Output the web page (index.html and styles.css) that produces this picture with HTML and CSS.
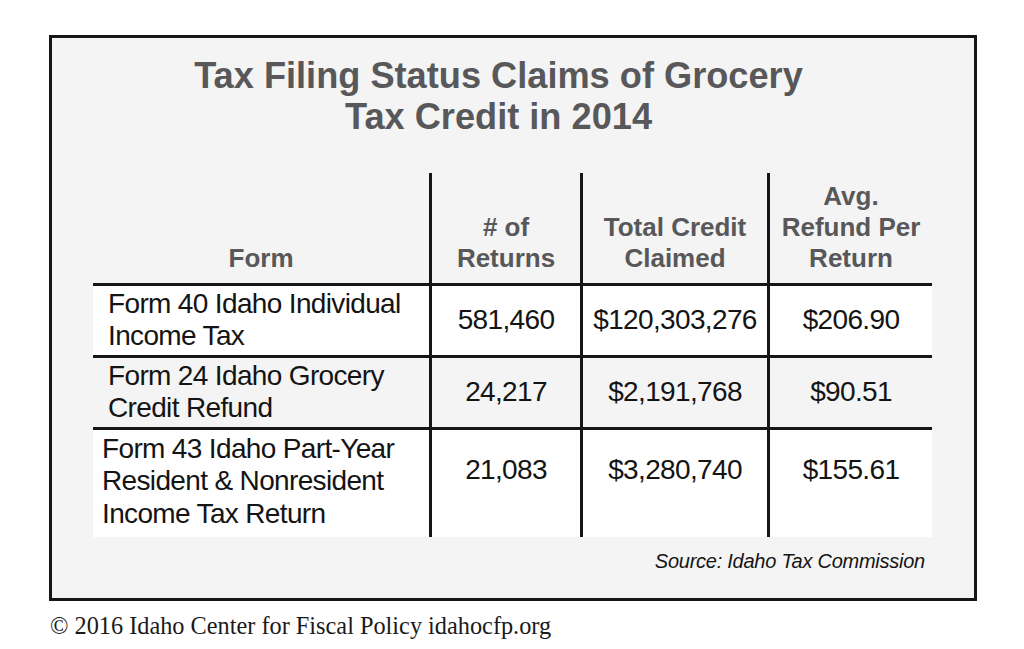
FILE: index.html
```html
<!DOCTYPE html>
<html lang="en">
<head>
<meta charset="utf-8">
<title>Tax Filing Status Claims of Grocery Tax Credit in 2014</title>
<link rel="stylesheet" href="styles.css">
</head>
<body>
<div class="panel">
  <h1 class="title">Tax Filing Status Claims of Grocery<br>Tax Credit in 2014</h1>
  <div class="grid">
    <div class="hd c1">Form</div>
    <div class="hd cx">#&nbsp;of<br>Returns</div>
    <div class="hd cx">Total Credit<br>Claimed</div>
    <div class="hd cx">Avg.<br>Refund Per<br>Return</div>

    <div class="cell c1 white form">Form 40 Idaho Individual<br>Income Tax</div>
    <div class="cell cx white num">581,460</div>
    <div class="cell cx white num">$120,303,276</div>
    <div class="cell cx white num">$206.90</div>

    <div class="cell c1 grey form">Form 24 Idaho Grocery<br>Credit Refund</div>
    <div class="cell cx grey num">24,217</div>
    <div class="cell cx grey num">$2,191,768</div>
    <div class="cell cx grey num">$90.51</div>

    <div class="cell c1 white form last">Form 43 Idaho Part-Year<br>Resident &amp; Nonresident<br>Income Tax Return</div>
    <div class="cell cx white num lastnum">21,083</div>
    <div class="cell cx white num lastnum">$3,280,740</div>
    <div class="cell cx white num lastnum">$155.61</div>
  </div>
  <p class="source">Source: Idaho Tax Commission</p>
</div>
<p class="footer">© 2016 Idaho Center for Fiscal Policy idahocfp.org</p>
</body>
</html>
```

FILE: styles.css
```css
html, body {
  margin: 0;
  padding: 0;
  background: #ffffff;
}

body {
  width: 1024px;
  height: 649px;
  overflow: hidden;
  font-family: "Liberation Sans", Arial, sans-serif;
}

.panel {
  box-sizing: border-box;
  margin: 35px 0 0 49px;
  width: 928px;
  height: 566px;
  border: 3px solid #161616;
  background: #f4f4f4;
  padding: 17px 42px 0 41px;
  display: flex;
  flex-direction: column;
}

.title {
  margin: 0;
  padding-right: 28px;
  font-size: 36.2px;
  line-height: 41px;
  font-weight: bold;
  color: #58585a;
  text-align: center;
}

.grid {
  margin-top: 36px;
  display: grid;
  grid-template-columns: 336px 151px 187px 165px;
  grid-template-rows: 110px 72px 72px 110px;
}

.hd {
  display: flex;
  align-items: flex-end;
  justify-content: center;
  text-align: center;
  font-size: 26px;
  line-height: 31px;
  font-weight: bold;
  color: #58585a;
  padding-bottom: 9px;
}

.cx {
  border-left: 3px solid #161616;
}

.cell {
  border-top: 3px solid #161616;
  color: #141414;
  font-size: 28px;
  line-height: 32.5px;
  letter-spacing: -0.65px;
}

.white { background: #ffffff; }
.grey { background: #f4f4f4; }

.form {
  padding: 1.5px 0 0 15px;
}

.form.last {
  padding: 2.5px 0 0 9px;
}

.num {
  display: flex;
  align-items: center;
  justify-content: center;
}

.num.lastnum {
  align-items: flex-start;
  padding-top: 24px;
}

.source {
  margin: 12px 0 0 0;
  padding-right: 7px;
  text-align: right;
  font-style: italic;
  font-size: 20px;
  line-height: 24px;
  letter-spacing: -0.25px;
  color: #141414;
}

.footer {
  margin: 11px 0 0 50px;
  font-family: "Liberation Serif", "Times New Roman", serif;
  font-size: 24.3px;
  line-height: 28px;
  color: #1a1a1a;
}
```
